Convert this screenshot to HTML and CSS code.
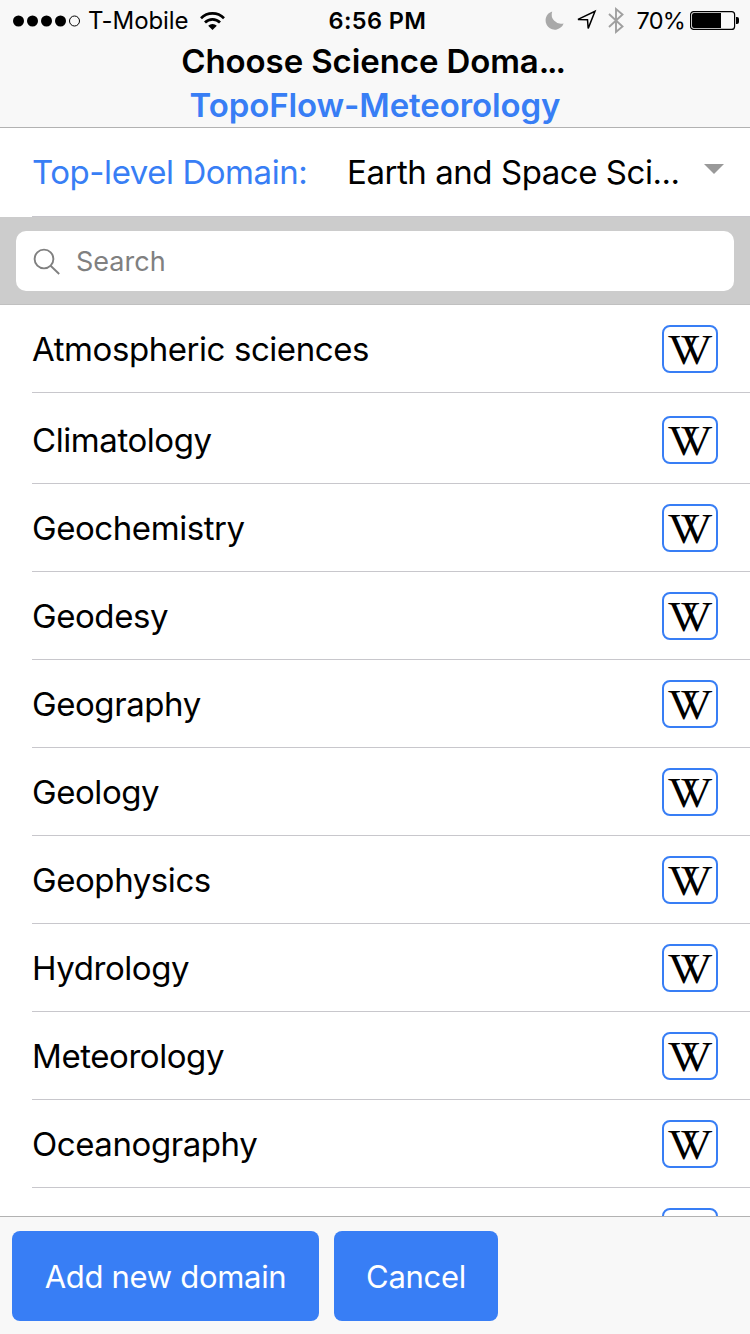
FILE: index.html
```html
<!DOCTYPE html>
<html lang="en">
<head>
<meta charset="utf-8">
<title>Choose Science Domain</title>
<link rel="stylesheet" href="styles.css">
</head>
<body>
<div class="app">
  <header class="header">
    <div class="status">
      <div class="status-left">
        <svg class="signal" width="68" height="12" viewBox="0 0 68 12"><circle cx="5.5" cy="6" r="5.5"/><circle cx="19.5" cy="6" r="5.5"/><circle cx="33.5" cy="6" r="5.5"/><circle cx="47.5" cy="6" r="5.5"/><circle cx="61.5" cy="6" r="5" fill="none" stroke="#000"/></svg>
        <span class="carrier">T-Mobile</span>
        <svg class="wifi" width="25" height="18" viewBox="0 0 25 18"><g fill="none" stroke="#000" stroke-width="2.7"><path d="M1 6.2a16.3 16.3 0 0 1 23 0"/><path d="M5 10.5a10.6 10.6 0 0 1 15 0"/></g><path d="M8.2 13.8a6 6 0 0 1 8.6 0L12.5 18z"/></svg>
      </div>
      <span class="time">6:56 PM</span>
      <div class="status-right">
        <svg width="19" height="19" viewBox="0 0 19 19"><path fill="#a9a9a9" d="M7.2.4A9.3 9.3 0 1 0 18.6 12.4 9.4 9.4 0 0 1 7.2.4z"/></svg>
        <svg class="locate" width="21" height="21" viewBox="0 0 21 21"><path d="M2 9.4 19 1.2l-6.8 17.2-.7-8.6z" fill="none" stroke="#000" stroke-width="1.5"/></svg>
        <svg class="bluetooth" width="16" height="27" viewBox="0 0 16 27"><path d="M1 7l13.5 12.5L8 25V2l6.5 5.5L1 20" fill="none" stroke="#a0a0a0" stroke-width="1.9"/></svg>
        <span class="percent">70%</span>
        <svg class="battery" width="49" height="19" viewBox="0 0 49 19"><rect x=".6" y=".6" width="44" height="17.8" rx="3" fill="none" stroke="#000" stroke-width="1.2"/><path d="M2 4q0-2 2-2h27v15H4q-2 0-2-2zM46 6h1q2 0 2 2v3q0 2-2 2h-1z"/></svg>
      </div>
    </div>
    <h1 class="title">Choose Science Doma<span class="dots">...</span></h1>
    <div class="subtitle">TopoFlow-Meteorology</div>
  </header>
  <section class="select">
    <span class="select-label">Top-level Domain:</span>
    <span class="select-value">Earth and Space Sci...</span>
    <svg class="caret" width="20" height="10" viewBox="0 0 20 10"><path fill="#999" d="M0 0h20L10 10z"/></svg>
  </section>
  <div class="search">
    <div class="search-box">
      <svg class="lens" width="28" height="28" viewBox="0 0 28 28"><g fill="none" stroke="#808080" stroke-width="1.9"><circle cx="11" cy="11" r="9.4"/><path d="M17.6 17.8l8.6 8.2"/></g></svg>
      <span class="placeholder">Search</span>
    </div>
  </div>
  <main class="list">
    <div class="row"><span>Atmospheric sciences</span><span class="wiki"><svg class="mark" width="52" height="44" role="img" aria-label="W"><text transform="scale(1.05 1)" x="3.7 16" y="37">VV</text></svg></span></div>
    <div class="row row-gap"><span>Climatology</span><span class="wiki"><svg class="mark" width="52" height="44" role="img" aria-label="W"><text transform="scale(1.05 1)" x="3.7 16" y="37">VV</text></svg></span></div>
    <div class="row"><span>Geochemistry</span><span class="wiki"><svg class="mark" width="52" height="44" role="img" aria-label="W"><text transform="scale(1.05 1)" x="3.7 16" y="37">VV</text></svg></span></div>
    <div class="row"><span>Geodesy</span><span class="wiki"><svg class="mark" width="52" height="44" role="img" aria-label="W"><text transform="scale(1.05 1)" x="3.7 16" y="37">VV</text></svg></span></div>
    <div class="row"><span>Geography</span><span class="wiki"><svg class="mark" width="52" height="44" role="img" aria-label="W"><text transform="scale(1.05 1)" x="3.7 16" y="37">VV</text></svg></span></div>
    <div class="row"><span>Geology</span><span class="wiki"><svg class="mark" width="52" height="44" role="img" aria-label="W"><text transform="scale(1.05 1)" x="3.7 16" y="37">VV</text></svg></span></div>
    <div class="row"><span>Geophysics</span><span class="wiki"><svg class="mark" width="52" height="44" role="img" aria-label="W"><text transform="scale(1.05 1)" x="3.7 16" y="37">VV</text></svg></span></div>
    <div class="row"><span>Hydrology</span><span class="wiki"><svg class="mark" width="52" height="44" role="img" aria-label="W"><text transform="scale(1.05 1)" x="3.7 16" y="37">VV</text></svg></span></div>
    <div class="row"><span>Meteorology</span><span class="wiki"><svg class="mark" width="52" height="44" role="img" aria-label="W"><text transform="scale(1.05 1)" x="3.7 16" y="37">VV</text></svg></span></div>
    <div class="row"><span>Oceanography</span><span class="wiki"><svg class="mark" width="52" height="44" role="img" aria-label="W"><text transform="scale(1.05 1)" x="3.7 16" y="37">VV</text></svg></span></div>
    <div class="row"><span></span><span class="wiki"></span></div>
  </main>
  <footer class="footer">
    <button class="btn btn-add">Add new domain</button>
    <button class="btn btn-cancel">Cancel</button>
  </footer>
</div>
</body>
</html>
```
FILE: styles.css
```css
* { box-sizing: border-box; }
body { margin: 0; font-family: Inter, sans-serif; color: #000; background: #fff; }
svg { display: block; flex: none; overflow: visible; }
.app { width: 750px; height: 1334px; display: flex; flex-direction: column; overflow: hidden; white-space: nowrap; }
.header { flex: none; height: 128px; background: #f8f8f8; border-bottom: 1px solid #b2b2b2; text-align: center; }
.status { height: 39px; padding: 0 11px 0 13px; display: grid; grid-template-columns: 1fr auto 1fr; align-items: center; font-size: 24px; line-height: 39px; }
.status-left, .status-right { display: flex; align-items: center; height: 39px; padding-top: 1px; }
.carrier { margin-left: 7px; letter-spacing: -0.1px; }
.wifi { margin-left: 12px; }
.status-right { justify-content: flex-end; }
.time { font-weight: 600; font-size: 23.5px; letter-spacing: 0.4px; padding: 1px 0 0 3px; }
.locate { margin-left: 12px; }
.bluetooth { margin-left: 11px; }
.percent { margin-left: 13px; font-size: 23.5px; letter-spacing: -0.8px; }
.battery { margin-left: 5px; }
.title { margin: 0; padding-right: 5px; font-size: 33px; line-height: 44px; font-weight: 600; letter-spacing: -0.1px; }
.dots { letter-spacing: -2.2px; }
.subtitle { font-size: 33px; line-height: 44px; font-weight: 600; color: #387ef5; letter-spacing: -0.1px; }
.select { flex: none; height: 89px; margin-left: 32px; border-bottom: 1px solid #c8c7cc; display: flex; align-items: center; font-size: 33px; padding-right: 26px; letter-spacing: -0.45px; }
.select-label { width: 315px; color: #387ef5; }
.select-value { flex: 1; }
.caret { margin-top: -7px; }
.search { flex: none; height: 88px; background: #ccc; border-bottom: 1px solid #c0c0c0; padding: 14px 16px 13px; }
.search-box { height: 60px; border-radius: 10px; background: #fff; display: flex; align-items: center; padding-left: 17px; gap: 15px; color: #808080; font-size: 27px; }
.lens { margin-top: 2px; }
.list { flex: 1; min-height: 0; overflow: hidden; font-size: 33px; letter-spacing: -0.43px; }
.row { height: 88px; margin-left: 32px; padding: 0 32px 0 0; border-bottom: 1px solid #c8c7cc; display: flex; align-items: center; justify-content: space-between; }
.row-gap { height: 91px; padding-top: 3px; }
.wiki { width: 56px; height: 48px; border: 2px solid #387ef5; border-radius: 8px; margin-top: 1px; }
.mark { font-family: "Liberation Serif", serif; font-size: 42px; letter-spacing: 0; }
.footer { flex: none; height: 118px; background: #f8f8f8; border-top: 1px solid #b2b2b2; padding: 14px 12px; display: flex; gap: 15px; }
.btn { height: 90px; border: 0; border-radius: 8px; padding: 1px 0 0; background: #387ef5; color: #fff; font-family: Inter, sans-serif; font-size: 31px; letter-spacing: -0.3px; }
.btn-add { width: 307px; }
.btn-cancel { width: 164px; }
```
